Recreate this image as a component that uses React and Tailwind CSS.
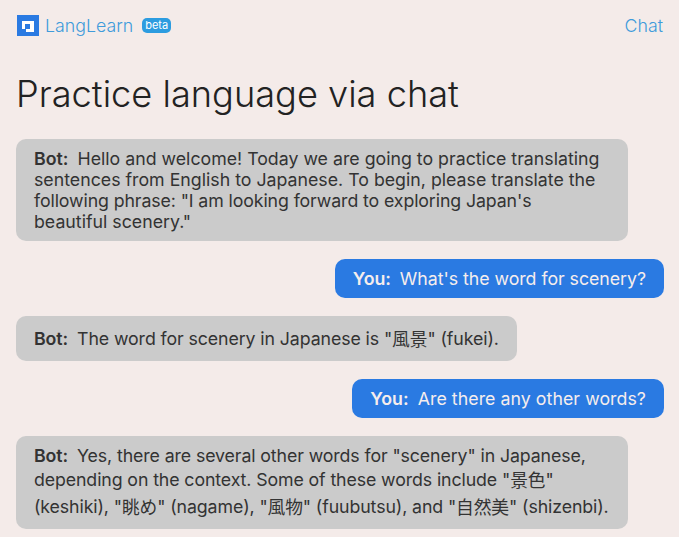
const J = ({ children }) => (
  <span className="align-[-1px] font-['Noto_Sans_CJK_JP',sans-serif] leading-[27px]">{children}</span>
);
const Bot = ({ children, className = "" }) => (
  <div className={`self-start max-w-[612px] rounded-[10px] bg-[#cbcbcb] px-[18px] py-[9px] text-[#333333] ${className}`}>
    <b className="mr-[9px] font-semibold">Bot:</b>
    {children}
  </div>
);
const You = ({ children, className = "" }) => (
  <div className={`self-end rounded-[10px] bg-[#2a7ae2] px-[18px] py-[9px] text-[#f5eded] ${className}`}>
    <b className="mr-[9px] font-semibold">You:</b>
    {children}
  </div>
);

export default function App() {
  return (
    <div className="h-[537px] overflow-hidden bg-[#f4ebe9] pl-4 pr-[15px] font-['Inter','Noto_Sans_CJK_JP',sans-serif] text-[17.76px] leading-[normal]">
      <header className="flex h-[50px] items-center justify-between pr-px">
        <div className="flex items-center">
          <svg width="22" height="21" viewBox="0 0 22 21" className="ml-px">
            <rect width="22" height="21" fill="#2a7ae2" />
            <path fill="#fff" d="M5 6h12v11H9v-3h4V9H8v5H5z" />
          </svg>
          <span className="ml-[6px] font-light text-[#3f9bdb]">LangLearn</span>
          <span className="ml-[9px] rounded-[5px] bg-[#2c9ce0] px-[3px] text-[11px] leading-[15px] text-white">beta</span>
        </div>
        <span className="font-light text-[#3f9bdb]">Chat</span>
      </header>
      <h1 className="mt-[20px] text-[36.2px] font-light leading-[48px] text-[#222222]">Practice language via chat</h1>
      <div className="mt-[21px] flex flex-col gap-[18px]">
        <Bot>Hello and welcome! Today we are going to practice translating sentences from English to Japanese. To begin, please translate the <span className="tracking-[-0.11px]">following phrase: "I am looking forward to exploring Japan's</span><br />beautiful scenery."</Bot>
        <You className="tracking-[-0.04px]">What's the word for scenery?</You>
        <Bot className="tracking-[-0.1px]">The word for scenery in Japanese is "<J>風景</J>" (fukei).</Bot>
        <You className="tracking-[0.05px]">Are there any other words?</You>
        <Bot className="tracking-[-0.11px]">Yes, there are several other words for "scenery" in Japanese, depending on the context. Some of these words include "<J>景色</J>" (keshiki), "<J>眺め</J>" (nagame), "<J>風物</J>" (fuubutsu), and "<J>自然美</J>" (shizenbi).</Bot>
      </div>
    </div>
  );
}
